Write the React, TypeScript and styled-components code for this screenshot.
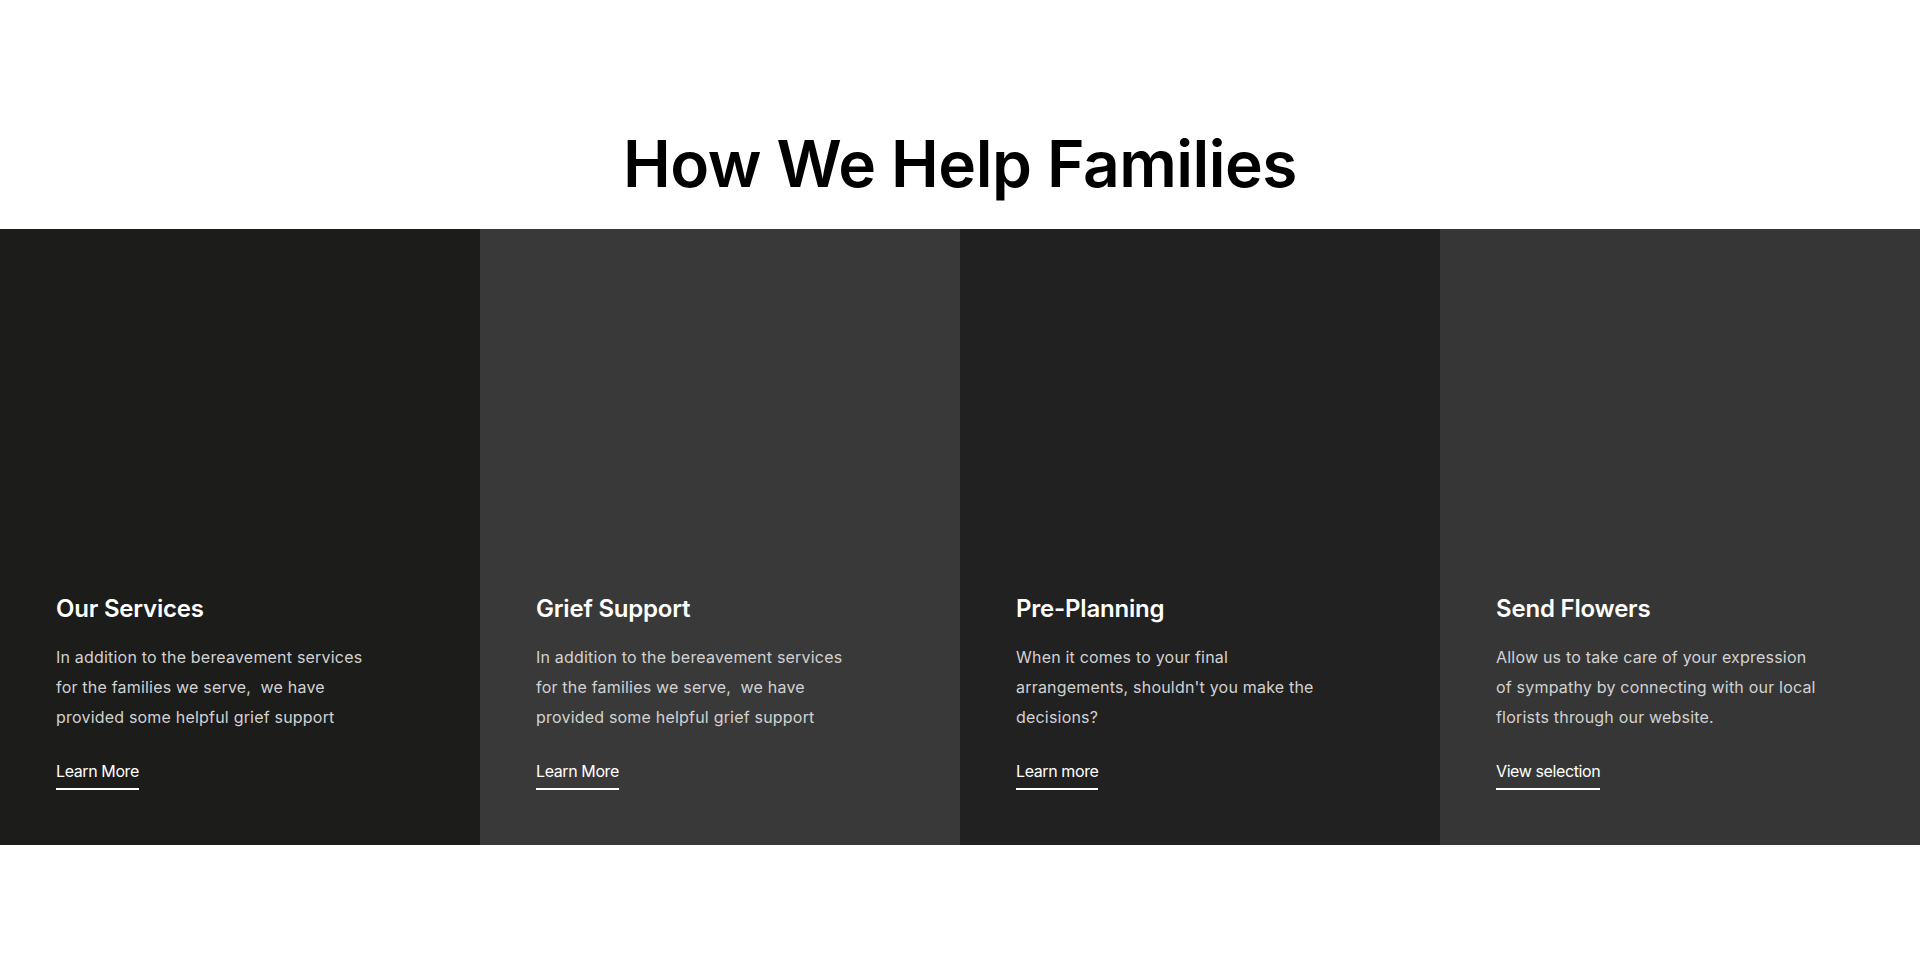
import React from "react";
import styled, { createGlobalStyle } from "styled-components";

const GlobalStyle = createGlobalStyle`
  html, body { margin: 0; padding: 0; background: #ffffff; }
  body { font-family: Inter, "Noto Sans", Arial, sans-serif; -webkit-font-smoothing: antialiased; }
`;

const Section = styled.section`
  padding-top: 126px;
  padding-bottom: 121px;
  background: #ffffff;
`;

const Heading = styled.h2`
  margin: 0 0 26px;
  text-align: center;
  font-family: Inter, "Noto Sans", sans-serif;
  font-size: 64px;
  line-height: 76.8px;
  font-weight: 600;
  letter-spacing: -0.5px;
  color: #000000;
`;

const Grid = styled.div`
  display: grid;
  grid-template-columns: repeat(4, 1fr);
`;

const Card = styled.div<{ $bg: string }>`
  height: 616px;
  box-sizing: border-box;
  background: ${(p) => p.$bg};
  display: flex;
  flex-direction: column;
  justify-content: flex-end;
  padding: 0 56px 55px;
`;

const Title = styled.h3`
  margin: 0 0 18.5px;
  font-family: Inter, "Noto Sans", sans-serif;
  font-size: 24px;
  line-height: 28.8px;
  font-weight: 600;
  letter-spacing: -0.2px;
  color: #ffffff;
`;

const Body = styled.p`
  margin: 0 0 27px;
  font-family: Inter, "Noto Sans", sans-serif;
  font-size: 16px;
  line-height: 30px;
  font-weight: 400;
  letter-spacing: 0.2px;
  color: #d2d2d2;
  white-space: nowrap;
`;

const LinkRow = styled.div`
  display: flex;
`;

const MoreLink = styled.a`
  display: inline-block;
  font-family: Inter, "Noto Sans", sans-serif;
  font-size: 16px;
  line-height: 24px;
  font-weight: 400;
  letter-spacing: -0.4px;
  color: #ffffff;
  text-decoration: none;
  padding-bottom: 5px;
  border-bottom: 2px solid #ffffff;
`;

type Item = { title: string; lines: string[]; link: string; bg: string };

const items: Item[] = [
  {
    title: "Our Services",
    lines: [
      "In addition to the bereavement services",
      "for the families we serve,\u00a0 we have",
      "provided some helpful grief support",
    ],
    link: "Learn More",
    bg: "#1c1c1b",
  },
  {
    title: "Grief Support",
    lines: [
      "In addition to the bereavement services",
      "for the families we serve,\u00a0 we have",
      "provided some helpful grief support",
    ],
    link: "Learn More",
    bg: "#393939",
  },
  {
    title: "Pre-Planning",
    lines: [
      "When it comes to your final",
      "arrangements, shouldn't you make the",
      "decisions?",
    ],
    link: "Learn more",
    bg: "#212121",
  },
  {
    title: "Send Flowers",
    lines: [
      "Allow us to take care of your expression",
      "of sympathy by connecting with our local",
      "florists through our website.",
    ],
    link: "View selection",
    bg: "#363636",
  },
];

export default function App() {
  return (
    <>
      <GlobalStyle />
      <Section>
        <Heading>How We Help Families</Heading>
        <Grid>
          {items.map((it) => (
            <Card key={it.title} $bg={it.bg}>
              <Title>{it.title}</Title>
              <Body>
                {it.lines.map((l, i) => (
                  <React.Fragment key={i}>
                    {l}
                    {i < it.lines.length - 1 && <br />}
                  </React.Fragment>
                ))}
              </Body>
              <LinkRow>
                <MoreLink href="#">{it.link}</MoreLink>
              </LinkRow>
            </Card>
          ))}
        </Grid>
      </Section>
    </>
  );
}
